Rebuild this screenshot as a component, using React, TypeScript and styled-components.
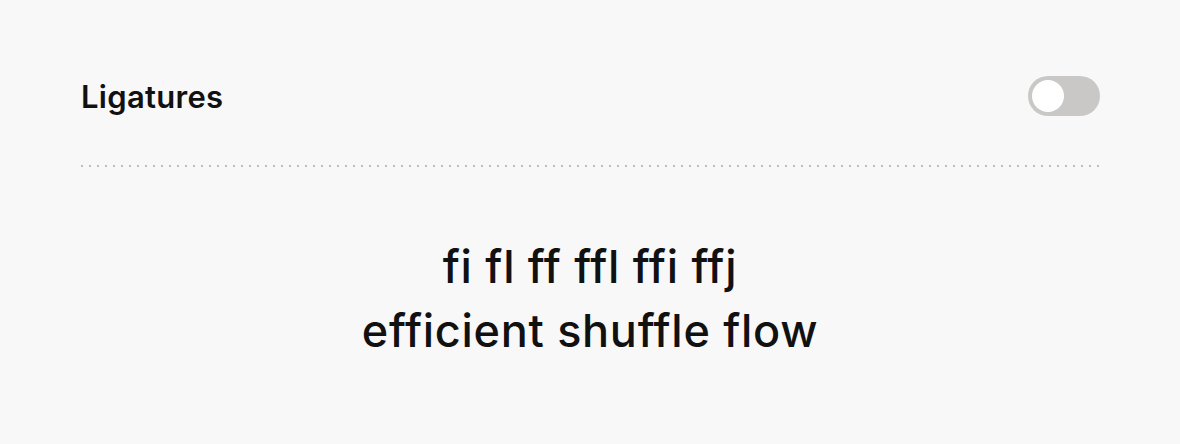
import styled, { createGlobalStyle } from "styled-components"

const Global = createGlobalStyle`
  html, body {
    margin: 0;
    background: #f8f8f8;
    font-family: Inter, "Noto Sans", sans-serif;
    color: #111;
  }
`

const Panel = styled.div`
  padding: 76px 80px 0;
  height: 444px;
  box-sizing: border-box;
`

const Header = styled.div`
  display: flex;
  align-items: center;
  justify-content: space-between;
  margin-bottom: 49px;
`

const Title = styled.div`
  font-size: 31px;
  font-weight: 600;
  letter-spacing: 0.3px;
  padding-left: 1px;
`

const Track = styled.div<{ $on: boolean }>`
  position: relative;
  width: 72px;
  height: 40px;
  border-radius: 20px;
  background: ${p => (p.$on ? "#111" : "#c9c8c6")};
`

const Knob = styled.div<{ $on: boolean }>`
  position: absolute;
  top: 4px;
  left: ${p => (p.$on ? "36px" : "4px")};
  width: 32px;
  height: 32px;
  border-radius: 50%;
  background: #fff;
`

const Divider = styled.div`
  height: 2px;
  background-image: linear-gradient(to right, #bdbdbd 2px, transparent 2px);
  background-size: 8px 2px;
  background-position: 1px 0;
`

const Preview = styled.div`
  padding-top: 68px;
  text-align: center;
  font-size: 45px;
  font-weight: 500;
  line-height: 64px;
  letter-spacing: 0.7px;
  font-variant-ligatures: none;
  font-feature-settings: "liga" 0, "clig" 0;
`

export default function App() {
  const on = false
  return <>
    <Global />
    <Panel>
      <Header>
        <Title>Ligatures</Title>
        <Track $on={on}>
          <Knob $on={on} />
        </Track>
      </Header>
      <Divider />
      <Preview>
        <div>fi fl ff ffl ffi ffj</div>
        <div>efficient shuffle flow</div>
      </Preview>
    </Panel>
  </>
}
